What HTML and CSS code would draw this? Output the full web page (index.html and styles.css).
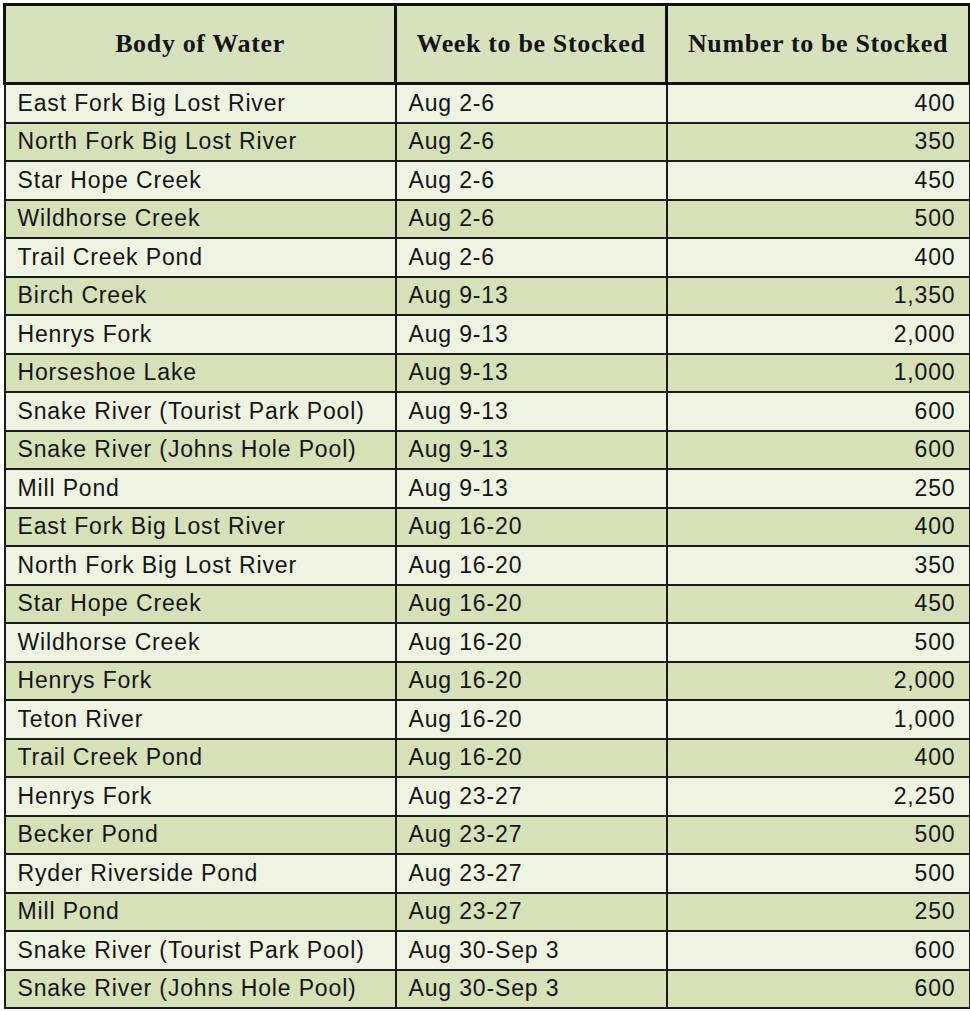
FILE: index.html
```html
<!DOCTYPE html>
<html>
<head>
<meta charset="utf-8">
<link rel="stylesheet" href="styles.css">
</head>
<body>
<table class="stock">
  <colgroup>
    <col class="c1"><col class="c2"><col class="c3">
  </colgroup>
  <thead>
    <tr><th>Body of Water</th><th>Week to be Stocked</th><th>Number to be Stocked</th></tr>
  </thead>
  <tbody>
    <tr><td>East Fork Big Lost River</td><td>Aug 2-6</td><td class="num">400</td></tr>
    <tr><td>North Fork Big Lost River</td><td>Aug 2-6</td><td class="num">350</td></tr>
    <tr><td>Star Hope Creek</td><td>Aug 2-6</td><td class="num">450</td></tr>
    <tr><td>Wildhorse Creek</td><td>Aug 2-6</td><td class="num">500</td></tr>
    <tr><td>Trail Creek Pond</td><td>Aug 2-6</td><td class="num">400</td></tr>
    <tr><td>Birch Creek</td><td>Aug 9-13</td><td class="num">1,350</td></tr>
    <tr><td>Henrys Fork</td><td>Aug 9-13</td><td class="num">2,000</td></tr>
    <tr><td>Horseshoe Lake</td><td>Aug 9-13</td><td class="num">1,000</td></tr>
    <tr><td>Snake River (Tourist Park Pool)</td><td>Aug 9-13</td><td class="num">600</td></tr>
    <tr><td>Snake River (Johns Hole Pool)</td><td>Aug 9-13</td><td class="num">600</td></tr>
    <tr><td>Mill Pond</td><td>Aug 9-13</td><td class="num">250</td></tr>
    <tr><td>East Fork Big Lost River</td><td>Aug 16-20</td><td class="num">400</td></tr>
    <tr><td>North Fork Big Lost River</td><td>Aug 16-20</td><td class="num">350</td></tr>
    <tr><td>Star Hope Creek</td><td>Aug 16-20</td><td class="num">450</td></tr>
    <tr><td>Wildhorse Creek</td><td>Aug 16-20</td><td class="num">500</td></tr>
    <tr><td>Henrys Fork</td><td>Aug 16-20</td><td class="num">2,000</td></tr>
    <tr><td>Teton River</td><td>Aug 16-20</td><td class="num">1,000</td></tr>
    <tr><td>Trail Creek Pond</td><td>Aug 16-20</td><td class="num">400</td></tr>
    <tr><td>Henrys Fork</td><td>Aug 23-27</td><td class="num">2,250</td></tr>
    <tr><td>Becker Pond</td><td>Aug 23-27</td><td class="num">500</td></tr>
    <tr><td>Ryder Riverside Pond</td><td>Aug 23-27</td><td class="num">500</td></tr>
    <tr><td>Mill Pond</td><td>Aug 23-27</td><td class="num">250</td></tr>
    <tr><td>Snake River (Tourist Park Pool)</td><td>Aug 30-Sep 3</td><td class="num">600</td></tr>
    <tr><td>Snake River (Johns Hole Pool)</td><td>Aug 30-Sep 3</td><td class="num">600</td></tr>
  </tbody>
</table>
</body>
</html>
```

FILE: styles.css
```css
html, body {
  margin: 0;
  padding: 0;
  background: #ffffff;
}
.stock {
  margin: 3px 0 0 3px;
  width: 965px;
  border-collapse: collapse;
  table-layout: fixed;
  font-family: "Liberation Sans", Arial, sans-serif;
  color: #141414;
}
.c1 { width: 391px; }
.c2 { width: 271px; }
.c3 { width: 303px; }
.stock th {
  height: 76px;
  padding: 0;
  border: 3px solid #111111;
  background: #d7e2bd;
  font-family: "Liberation Serif", "Times New Roman", serif;
  font-weight: bold;
  font-size: 26px;
  letter-spacing: 0.65px;
  line-height: 1;
  text-align: center;
  vertical-align: middle;
}
.stock td {
  height: 36.5px;
  padding: 0 12px;
  border: 2px solid #1a1a1a;
  font-size: 23px;
  letter-spacing: 0.85px;
  line-height: 1;
  vertical-align: middle;
  white-space: nowrap;
}
.stock tbody tr:nth-child(odd) td { background: #eef3e2; }
.stock tbody tr:nth-child(even) td { background: #d6e1b8; }
.stock td.num {
  text-align: right;
  padding-right: 13px;
}
```
